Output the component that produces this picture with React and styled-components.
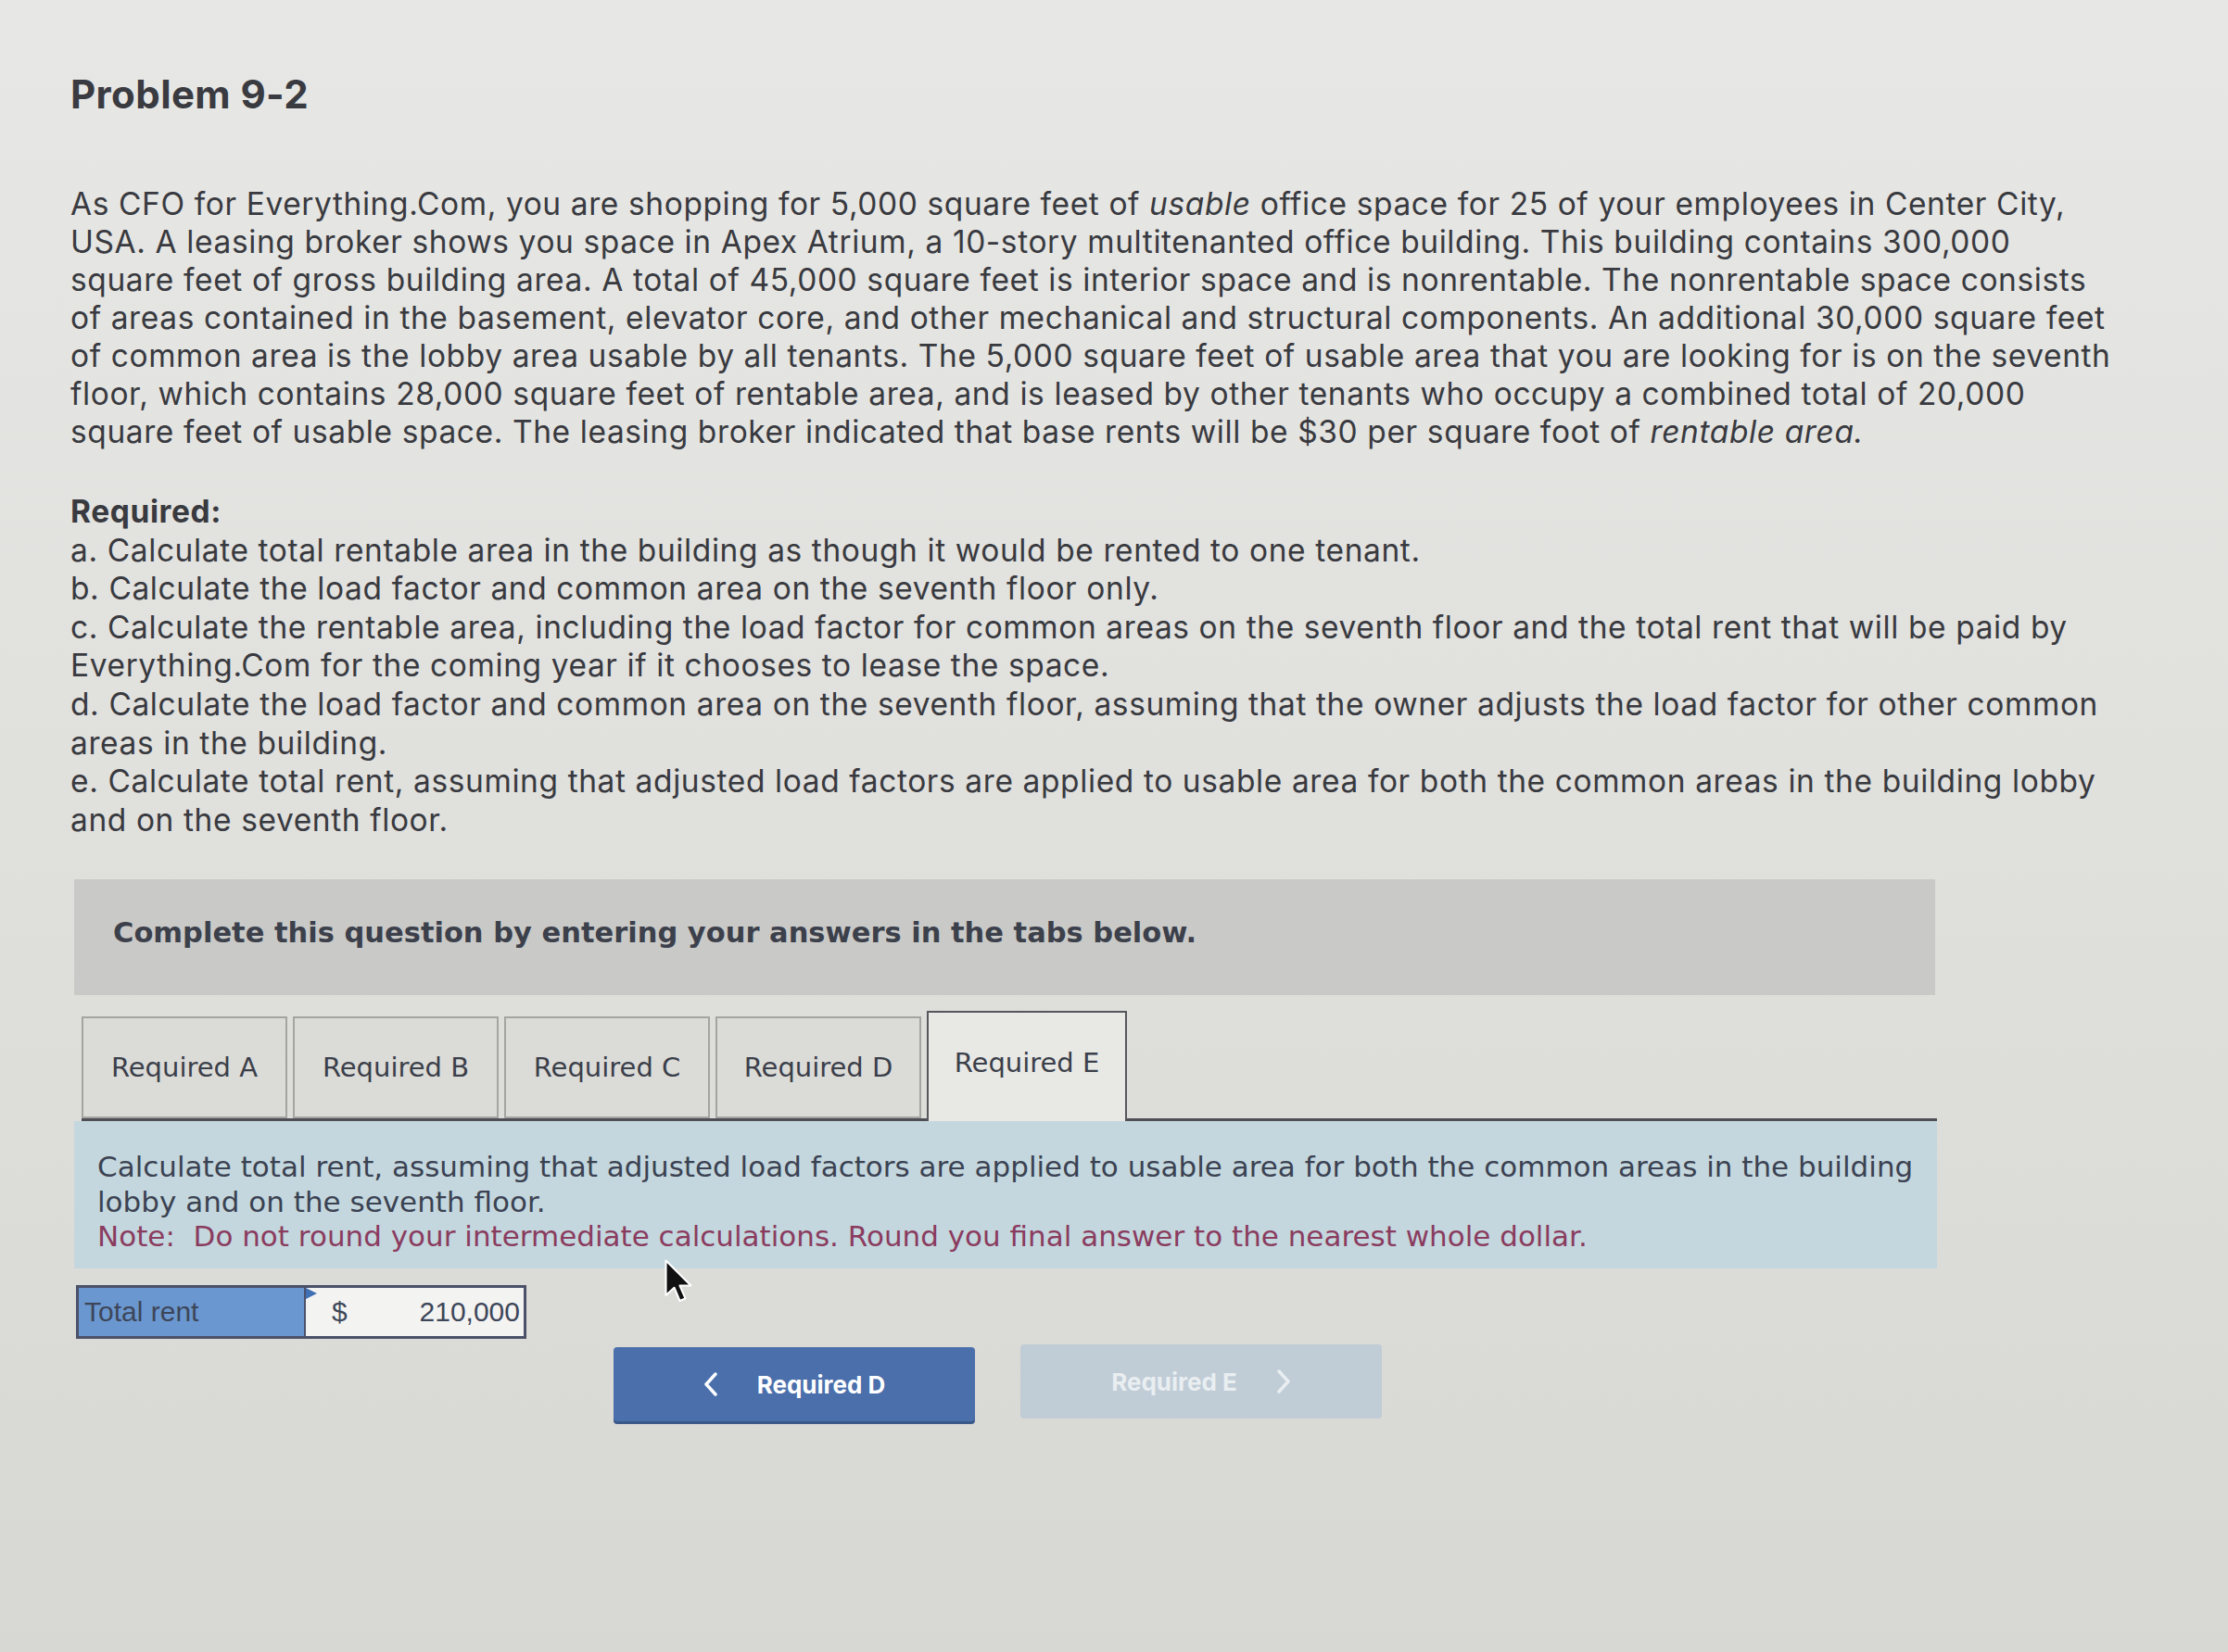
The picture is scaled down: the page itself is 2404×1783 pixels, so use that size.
import styled, { createGlobalStyle } from 'styled-components';

const Global = createGlobalStyle`
	html, body {
		margin: 0;
		padding: 0;
	}
	body {
		background: #dcdcd9;
	}
	* {
		box-sizing: border-box;
	}
`;

const Page = styled.div`
	position: relative;
	width: 2404px;
	min-height: 1783px;
	padding: 81px 0 0 76px;
	overflow: hidden;
	background: linear-gradient(180deg, #e7e7e5 0%, #dfdfdc 55%, #d7d7d3 100%);
	color: #393a3f;
`;

const Title = styled.h1`
	margin: 0;
	font-family: Inter, 'Open Sans', sans-serif;
	font-weight: 700;
	font-size: 42px;
	letter-spacing: 0.4px;
	line-height: 42px;
	color: #3a3b41;
`;

const Problem = styled.p`
	margin: 77px 0 0;
	font-family: Inter, 'Open Sans', sans-serif;
	font-size: 33.5px;
	letter-spacing: 0.6px;
	line-height: 41px;
	white-space: nowrap;
`;

const Required = styled.div`
	margin-top: 45px;
	font-family: Inter, 'Open Sans', sans-serif;
	font-size: 33.5px;
	letter-spacing: 0.6px;
	line-height: 41.6px;
	white-space: nowrap;
`;

const Label = styled.div`
	font-weight: 700;
`;

const Banner = styled.div`
	margin: 43px 0 0 4px;
	width: 2008px;
	height: 125px;
	padding: 40px 0 0 42px;
	background: #c9c9c7;
	font-family: 'DejaVu Sans', Verdana, sans-serif;
	font-weight: 700;
	font-size: 30.5px;
	line-height: 36px;
	color: #3c404b;
`;

const TabBar = styled.div`
	display: flex;
	align-items: flex-end;
	gap: 6px;
	margin: 17px 0 0 12px;
	width: 2002px;
	border-bottom: 3px solid #4d4f55;
`;

const Tab = styled.div`
	display: flex;
	align-items: center;
	justify-content: center;
	width: ${(p) => (p.$active ? '216px' : '222px')};
	height: ${(p) => (p.$active ? '119px' : '110px')};
	margin-bottom: ${(p) => (p.$active ? '-3px' : '0')};
	border: 2px solid ${(p) => (p.$active ? '#55575c' : '#a4a4a1')};
	border-bottom: ${(p) => (p.$active ? 'none' : '2px solid #a4a4a1')};
	background: ${(p) => (p.$active ? '#e8e8e5' : '#dbdbd8')};
	font-family: 'DejaVu Sans', Verdana, sans-serif;
	font-size: 29px;
	color: #3b3f4a;
	padding-bottom: ${(p) => (p.$active ? '9px' : '0')};
`;

const Info = styled.div`
	margin-left: 4px;
	width: 2010px;
	height: 159px;
	padding: 31px 0 0 25px;
	background: #c4d7de;
	font-family: 'DejaVu Sans', Verdana, sans-serif;
	font-size: 31px;
	line-height: 37.5px;
	color: #3b4252;
	white-space: nowrap;
`;

const Note = styled.span`
	color: #8a3c5f;
`;

const AnswerRow = styled.div`
	display: flex;
	margin: 18px 0 0 6px;
	width: 486px;
	height: 58px;
	border: 3px solid #4b5169;
	font-family: 'Liberation Sans', Arial, sans-serif;
	font-size: 30px;
	color: #3d4659;
`;

const AnswerLabel = styled.div`
	display: flex;
	align-items: center;
	width: 243px;
	padding-left: 6px;
	background: #6a97cf;
`;

const AnswerInput = styled.div`
	position: relative;
	flex: 1;
	display: flex;
	align-items: center;
	justify-content: space-between;
	padding: 0 4px 0 28px;
	background: #f3f3f1;
	border-left: 2px solid #4b5169;

	&::before {
		content: '';
		position: absolute;
		left: 0;
		top: 0;
		border-style: solid;
		border-width: 6px 0 6px 12px;
		border-color: transparent transparent transparent #3f6fb4;
	}
`;

const Nav = styled.div`
	display: flex;
	gap: 49px;
	margin: 9px 0 0 586px;
`;

const NavButton = styled.button`
	display: flex;
	align-items: center;
	justify-content: center;
	gap: 42px;
	width: 390px;
	height: 80px;
	border: none;
	border-radius: 4px;
	font-family: Inter, 'Open Sans', sans-serif;
	font-weight: 700;
	font-size: 26px;
	background: ${(p) => (p.$disabled ? '#c0ccd6' : '#4a6fab')};
	color: ${(p) => (p.$disabled ? '#e9eef1' : '#ffffff')};
	box-shadow: ${(p) => (p.$disabled ? 'none' : '0 3px 0 #3a5888')};
	margin-top: ${(p) => (p.$disabled ? '-3px' : '0')};
`;

const Cursor = styled.svg`
	position: absolute;
	left: 717px;
	top: 1359px;
	width: 30px;
	height: 48px;
`;

const Chevron = ({ dir }) => (
	<svg width="16" height="26" viewBox="0 0 16 26">
		<polyline
			points={dir === 'left' ? '13,2 3,13 13,24' : '3,2 13,13 3,24'}
			fill="none"
			stroke="currentColor"
			strokeWidth="3.5"
			strokeLinecap="round"
			strokeLinejoin="round"
		/>
	</svg>
);

const tabs = ['Required A', 'Required B', 'Required C', 'Required D', 'Required E'];

export default function App() {
	return (
		<Page>
			<Global />
			<Title>Problem 9-2</Title>
			<Problem>
				As CFO for Everything.Com, you are shopping for 5,000 square feet of <i>usable</i> office space for 25 of your employees in Center City,
				<br />
				USA. A leasing broker shows you space in Apex Atrium, a 10-story multitenanted office building. This building contains 300,000
				<br />
				square feet of gross building area. A total of 45,000 square feet is interior space and is nonrentable. The nonrentable space consists
				<br />
				of areas contained in the basement, elevator core, and other mechanical and structural components. An additional 30,000 square feet
				<br />
				of common area is the lobby area usable by all tenants. The 5,000 square feet of usable area that you are looking for is on the seventh
				<br />
				floor, which contains 28,000 square feet of rentable area, and is leased by other tenants who occupy a combined total of 20,000
				<br />
				square feet of usable space. The leasing broker indicated that base rents will be $30 per square foot of <i>rentable area.</i>
			</Problem>
			<Required>
				<Label>Required:</Label>
				a. Calculate total rentable area in the building as though it would be rented to one tenant.
				<br />
				b. Calculate the load factor and common area on the seventh floor only.
				<br />
				c. Calculate the rentable area, including the load factor for common areas on the seventh floor and the total rent that will be paid by
				<br />
				Everything.Com for the coming year if it chooses to lease the space.
				<br />
				d. Calculate the load factor and common area on the seventh floor, assuming that the owner adjusts the load factor for other common
				<br />
				areas in the building.
				<br />
				e. Calculate total rent, assuming that adjusted load factors are applied to usable area for both the common areas in the building lobby
				<br />
				and on the seventh floor.
			</Required>
			<Banner>Complete this question by entering your answers in the tabs below.</Banner>
			<TabBar>
				{tabs.map((t) => (
					<Tab key={t} $active={t === 'Required E'}>
						{t}
					</Tab>
				))}
			</TabBar>
			<Info>
				Calculate total rent, assuming that adjusted load factors are applied to usable area for both the common areas in the building
				<br />
				lobby and on the seventh floor.
				<br />
				<Note>Note:&nbsp; Do not round your intermediate calculations. Round you final answer to the nearest whole dollar.</Note>
			</Info>
			<AnswerRow>
				<AnswerLabel>Total rent</AnswerLabel>
				<AnswerInput>
					<span>$</span>
					<span>210,000</span>
				</AnswerInput>
			</AnswerRow>
			<Nav>
				<NavButton>
					<Chevron dir="left" />
					<span>Required D</span>
				</NavButton>
				<NavButton $disabled>
					<span>Required E</span>
					<Chevron dir="right" />
				</NavButton>
			</Nav>
			<Cursor viewBox="0 0 20 32">
				<path d="M1 1 L1 26 L7 20.5 L11 30 L15 28.3 L11 19 L19 19 Z" fill="#111" stroke="#fff" strokeWidth="1.4" strokeLinejoin="round" />
			</Cursor>
		</Page>
	);
}
